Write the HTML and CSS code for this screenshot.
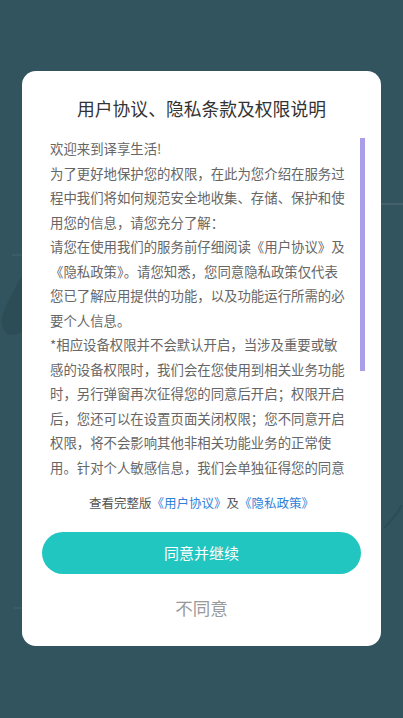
FILE: index.html
```html
<!DOCTYPE html>
<html lang="zh-CN">
<head>
<meta charset="utf-8">
<title>用户协议</title>
<link rel="stylesheet" href="styles.css">
</head>
<body>
<svg class="bg-art" width="403" height="718" viewBox="0 0 403 718" aria-hidden="true">
  <path d="M381 204 H403" stroke="#45606a" stroke-width="2" fill="none"/>
  <path d="M12 255 H22" stroke="#45646e" stroke-width="1" fill="none"/>
  <path d="M2 318 C5 306 9 300 13 292 C16 286 19 280 22 276 L22 332 C17 334 12 336 8 334 C4 331 1 326 2 318 Z" fill="#2c4c56"/>
  <path d="M384 528 C390 522 396 516 402 505" stroke="#2c4c56" stroke-width="2" fill="none"/>
  <path d="M14 608 H22" stroke="#45646e" stroke-width="1" fill="none"/>
</svg>
<main class="page">
  <section class="dialog">
    <h1 class="title">用户协议、隐私条款及权限说明</h1>
    <div class="scroll-wrap">
      <div class="scroll">
        <p>欢迎来到译享生活!</p>
        <p>为了更好地保护您的权限，在此为您介绍在服务过程中我们将如何规范安全地收集、存储、保护和使用您的信息，请您充分了解：</p>
        <p>请您在使用我们的服务前仔细阅读《用户协议》及《隐私政策》。请您知悉，您同意隐私政策仅代表您已了解应用提供的功能，以及功能运行所需的必要个人信息。</p>
        <p>*相应设备权限并不会默认开启，当涉及重要或敏感的设备权限时，我们会在您使用到相关业务功能时，另行弹窗再次征得您的同意后开启；权限开启后，您还可以在设置页面关闭权限；您不同意开启权限，将不会影响其他非相关功能业务的正常使用。针对个人敏感信息，我们会单独征得您的同意</p>
      </div>
      <div class="thumb"></div>
    </div>
    <p class="links">查看完整版<a class="link" href="#">《用户协议》</a>及<a class="link" href="#">《隐私政策》</a></p>
    <button class="agree" type="button">同意并继续</button>
    <button class="disagree" type="button">不同意</button>
  </section>
</main>
</body>
</html>
```
FILE: styles.css
```css
html, body {
  margin: 0;
  padding: 0;
}
body {
  width: 403px;
  height: 718px;
  background: #31545f;
  font-family: "Noto Sans CJK SC", "Noto Sans", sans-serif;
  overflow: hidden;
  position: relative;
}
.bg-art {
  position: absolute;
  left: 0;
  top: 0;
}
.page {
  position: relative;
  padding-top: 71px;
  display: flex;
  justify-content: center;
}
.dialog {
  width: 359px;
  height: 575px;
  box-sizing: border-box;
  background: #fff;
  border-radius: 14px;
  padding: 25px 0 0;
  display: flex;
  flex-direction: column;
  align-items: stretch;
}
.title {
  margin: 0;
  font-size: 17.8px;
  line-height: 24px;
  font-weight: 400;
  color: #333;
  text-align: center;
}
.scroll-wrap {
  position: relative;
  margin-top: 16px;
  height: 342px;
}
.scroll {
  height: 100%;
  overflow: hidden;
  padding-left: 28px;
  width: 300px;
}
.scroll p {
  margin: 0;
  font-size: 13.4px;
  line-height: 24.5px;
  color: #666;
}
.thumb {
  position: absolute;
  right: 16px;
  top: 2px;
  width: 5px;
  height: 233px;
  background: #a99ee8;
}
.links {
  margin: 16px 0 0;
  text-align: center;
  font-size: 12.5px;
  line-height: 18px;
  color: #555;
}
.link {
  color: #2f82d8;
  text-decoration: none;
}
.agree {
  margin: 20px 20px 0;
  height: 42px;
  border: none;
  border-radius: 21px;
  background: #22c6c1;
  color: #fff;
  font-family: inherit;
  font-size: 15px;
  line-height: 22px;
  padding: 0;
}
.disagree {
  margin: 22px auto 0;
  border: none;
  background: none;
  color: #9a9a9a;
  font-family: inherit;
  font-size: 17.5px;
  line-height: 24px;
  padding: 0;
}
```
